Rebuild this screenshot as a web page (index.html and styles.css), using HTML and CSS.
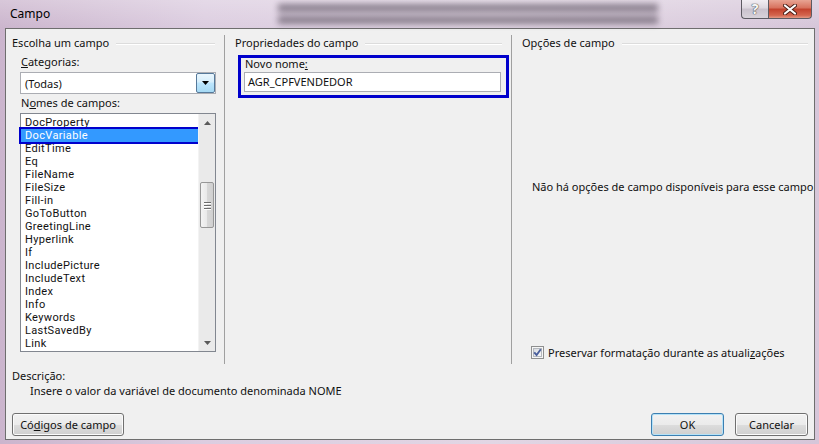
FILE: index.html
```html
<!DOCTYPE html>
<html lang="pt">
<head>
    <meta charset="UTF-8">
    <title>Campo</title>
    <link rel="stylesheet" href="styles.css">
</head>
<body>
<div class="window">
    <div class="titlebar">
        <span class="title">Campo</span>
        <span class="glass"></span>
        <div class="caption-buttons">
            <span class="cap-btn help">?</span>
            <span class="cap-btn close">
                <svg width="14" height="11" viewBox="0 0 14 11">
                    <path d="M2 1.5 L12 9.5 M12 1.5 L2 9.5" stroke="#4a1e16" stroke-width="4" stroke-linecap="round"/>
                    <path d="M2 1.5 L12 9.5 M12 1.5 L2 9.5" stroke="#fff" stroke-width="2.2" stroke-linecap="round"/>
                </svg>
            </span>
        </div>
    </div>

    <div class="client">
        <div class="columns">
            <section class="col col-choose">
                <div class="group-title"><span>Escolha um campo</span><i class="rule"></i></div>
                <div class="field-label"><u>C</u>ategorias:</div>
                <div class="combo">
                    <span class="combo-text">(Todas)</span>
                    <span class="combo-btn">
                        <svg width="7" height="4" viewBox="0 0 7 4"><polygon points="0,0 7,0 3.5,4" fill="#000"/></svg>
                    </span>
                </div>
                <div class="field-label names-label">N<u>o</u>mes de campos:</div>
                <div class="listbox">
                    <ul class="items">
                        <li>DocProperty</li>
                        <li class="selected">DocVariable</li>
                        <li>EditTime</li>
                        <li>Eq</li>
                        <li>FileName</li>
                        <li>FileSize</li>
                        <li>Fill-in</li>
                        <li>GoToButton</li>
                        <li>GreetingLine</li>
                        <li>Hyperlink</li>
                        <li>If</li>
                        <li>IncludePicture</li>
                        <li>IncludeText</li>
                        <li>Index</li>
                        <li>Info</li>
                        <li>Keywords</li>
                        <li>LastSavedBy</li>
                        <li>Link</li>
                    </ul>
                    <div class="scrollbar">
                        <span class="sb-arrow">
                            <svg width="7" height="4" viewBox="0 0 7 4"><polygon points="0,4 7,4 3.5,0" fill="#5a5a5a"/></svg>
                        </span>
                        <div class="sb-track">
                            <span class="sb-thumb"><i></i><i></i><i></i></span>
                        </div>
                        <span class="sb-arrow">
                            <svg width="7" height="4" viewBox="0 0 7 4"><polygon points="0,0 7,0 3.5,4" fill="#5a5a5a"/></svg>
                        </span>
                    </div>
                </div>
            </section>

            <section class="col col-props">
                <div class="group-title"><span>Propriedades do campo</span><i class="rule"></i></div>
                <div class="name-box">
                    <div class="name-label">Novo nome<u>:</u></div>
                    <div class="textbox">AGR_CPFVENDEDOR</div>
                </div>
            </section>

            <section class="col col-options">
                <div class="group-title"><span>Opções de campo</span><i class="rule"></i></div>
                <div class="no-options">Não há opções de campo disponíveis para esse campo</div>
                <div class="check-row">
                    <svg class="checkbox" width="13" height="13" viewBox="0 0 13 13">
                        <defs>
                            <linearGradient id="cbg" x1="0" y1="0" x2="1" y2="1">
                                <stop offset="0" stop-color="#d6d9de"/>
                                <stop offset="1" stop-color="#fbfbfb"/>
                            </linearGradient>
                        </defs>
                        <rect x="0.5" y="0.5" width="12" height="12" fill="#f6f6f6" stroke="#8e8f8f"/>
                        <rect x="2.5" y="2.5" width="8" height="8" fill="url(#cbg)" stroke="#b4b8be"/>
                        <path d="M3.2 6.3 L5.6 9 L9.8 3.3" fill="none" stroke="#4a5f9c" stroke-width="1.9"/>
                    </svg>
                    <span>Preservar formatação durante as atuali<u>z</u>ações</span>
                </div>
            </section>
        </div>

        <div class="description">
            <div class="desc-label">Descrição:</div>
            <div class="desc-text">Insere o valor da variável de documento denominada NOME</div>
        </div>

        <div class="actions">
            <button class="btn btn-codes">Có<u>d</u>igos de campo</button>
            <button class="btn btn-default">OK</button>
            <button class="btn">Cancelar</button>
        </div>
    </div>
</div>
</body>
</html>
```

FILE: styles.css
```css
:root {
    --face: #f0f0f0;
    --group-rule: #dcdcdc;
    --divider: #a0a0a0;
    --mark: #0000cc;
}

* {
    box-sizing: border-box;
}

html, body {
    margin: 0;
    padding: 0;
}

body {
    width: 819px;
    height: 444px;
    overflow: hidden;
    font-family: "Noto Sans", "Open Sans", sans-serif;
    font-size: 11px;
    color: #111;
    background: linear-gradient(to right, #cbb5cd 0%, #dccde0 25%, #e2d6e4 60%, #d6c6d9 100%);
}

.window {
    display: flex;
    flex-direction: column;
    height: 444px;
}

/* Aero title bar */
.titlebar {
    height: 28px;
    flex-shrink: 0;
    display: flex;
    align-items: flex-start;
    background: linear-gradient(to bottom, rgba(255, 255, 255, 0.25), rgba(255, 255, 255, 0));
}

.title {
    margin: 6px 0 0 10px;
    font-size: 12px;
    line-height: 16px;
    color: #000;
}

.glass {
    width: 380px;
    height: 26px;
    margin-left: 228px;
    background:
        linear-gradient(to bottom, transparent 3px, rgba(75, 65, 80, 0.7) 5px, rgba(75, 65, 80, 0.7) 11px, transparent 13px, transparent 15px, rgba(65, 55, 70, 0.65) 17px, rgba(65, 55, 70, 0.65) 23px, transparent 25px);
    filter: blur(3px);
    opacity: 0.85;
}

.caption-buttons {
    margin-left: auto;
    margin-right: 7px;
    display: flex;
}

.cap-btn {
    height: 19px;
    display: flex;
    align-items: center;
    justify-content: center;
    border: 1px solid #5d5a62;
    border-top: none;
}

.help {
    width: 27px;
    border-radius: 0 0 0 4px;
    border-right: none;
    background: linear-gradient(to bottom, #f2eef3 0%, #ddd7df 45%, #c9c1cc 50%, #d8d2da 100%);
    font-size: 14px;
    font-weight: bold;
    color: #f8f8f8;
    text-shadow: 0 0 1px #555, 0 0 1px #555, 0 0 1px #555;
    line-height: 18px;
}

.close {
    width: 44px;
    border-radius: 0 0 4px 0;
    background: linear-gradient(to bottom, #e8a493 0%, #d7705c 45%, #c2412c 50%, #d4654e 85%, #e39a86 100%);
}

/* dialog client area */
.client {
    flex: 1;
    margin: 0 4px 4px 5px;
    border: 1px solid #6e6e6e;
    background: var(--face);
    display: flex;
    flex-direction: column;
}

.columns {
    display: flex;
    margin-top: 6px;
    height: 329px;
}

.col {
    display: flex;
    flex-direction: column;
}

.col-choose {
    width: 219px;
    border-right: 1px solid var(--divider);
}

.col-props {
    width: 287px;
    border-right: 1px solid var(--divider);
}

.col-options {
    flex: 1;
}

.group-title {
    display: flex;
    align-items: center;
    height: 16px;
    line-height: 16px;
    padding-left: 10px;
    margin-right: 9px;
}

.col-choose .group-title {
    padding-left: 6px;
}

.col-options .group-title {
    margin-right: 6px;
}

.rule {
    flex: 1;
    height: 1px;
    margin-left: 7px;
    background: var(--group-rule);
    box-shadow: 0 1px 0 #fff;
}

.field-label {
    margin: 3px 0 0 15px;
    line-height: 15px;
}

.names-label {
    margin-top: 1px;
}

.combo {
    display: flex;
    align-items: center;
    width: 196px;
    height: 22px;
    margin: 3px 0 0 14px;
    background: #fff;
    border: 1px solid #abadb3;
}

.combo-text {
    flex: 1;
    padding-left: 4px;
}

.combo-btn {
    width: 19px;
    height: 20px;
    display: flex;
    align-items: center;
    justify-content: center;
    border: 1px solid #56799a;
    border-radius: 2px;
    background: linear-gradient(to bottom, #eaf6fd 0%, #d7effc 45%, #bde6fd 50%, #a6d9f4 100%);
}

.listbox {
    display: flex;
    width: 196px;
    height: 239px;
    margin: 3px 0 0 14px;
    background: #fff;
    border: 1px solid #828790;
}

/* tighter font so 13px rows don't collide */
.items {
    flex: 1;
    list-style: none;
    margin: 0;
    padding: 2px 0 0;
    font-family: Roboto, "Noto Sans", sans-serif;
    font-size: 11px;
    letter-spacing: 0.35px;
}

.items li {
    height: 13px;
    line-height: 13px;
    padding-left: 4px;
    white-space: nowrap;
}

.items li.selected {
    background: #3399ff;
    color: #fff;
    outline: 2px solid var(--mark);
}

.scrollbar {
    width: 17px;
    display: flex;
    flex-direction: column;
    background: #eaeaea;
    border-left: 1px solid #f3f3f3;
}

.sb-arrow {
    height: 17px;
    display: flex;
    align-items: center;
    justify-content: center;
}

.sb-track {
    flex: 1;
}

.sb-thumb {
    display: flex;
    flex-direction: column;
    align-items: center;
    justify-content: center;
    gap: 2px;
    height: 46px;
    margin: 51px 1px 0;
    border: 1px solid #979797;
    border-radius: 2px;
    background: linear-gradient(to right, #f4f4f4 0%, #e9e9e9 50%, #d8d8d8 51%, #d0d0d0 100%);
}

.sb-thumb i {
    width: 7px;
    height: 1px;
    background: #6c6c6c;
    box-shadow: 0 1px 0 #fff;
}

/* Novo nome (highlighted) */
.name-box {
    width: 271px;
    margin: 4px 0 0 13px;
    border: 3px solid var(--mark);
    padding: 0 0 3px 3px;
}

.name-label {
    line-height: 12px;
    padding-left: 1px;
}

.textbox {
    width: 257px;
    height: 20px;
    margin-top: 2px;
    line-height: 18px;
    padding-left: 3px;
    background: #fff;
    border: 1px solid #abadb3;
}

.no-options {
    margin: 128px 0 0 20px;
    line-height: 15px;
    white-space: nowrap;
}

.check-row {
    display: flex;
    align-items: center;
    gap: 4px;
    margin: 151px 0 0 19px;
    line-height: 15px;
}

.description {
    margin-top: 4px;
    padding-left: 6px;
    line-height: 15px;
}

.desc-text {
    padding-left: 18px;
}

.actions {
    display: flex;
    gap: 11px;
    margin-top: 15px;
    padding: 0 6px;
}

.btn {
    width: 73px;
    height: 23px;
    padding: 0;
    font: inherit;
    color: #111;
    border: 1px solid #707070;
    border-radius: 3px;
    background: linear-gradient(to bottom, #f2f2f2 0%, #ebebeb 50%, #dddddd 51%, #cfcfcf 100%);
    box-shadow: inset 0 0 0 1px #fbfbfb;
}

.btn-codes {
    width: 112px;
}

.btn-default {
    margin-left: auto;
    border-color: #3c7fb1;
    box-shadow: inset 0 0 0 1px #b5e2f8;
}
```
